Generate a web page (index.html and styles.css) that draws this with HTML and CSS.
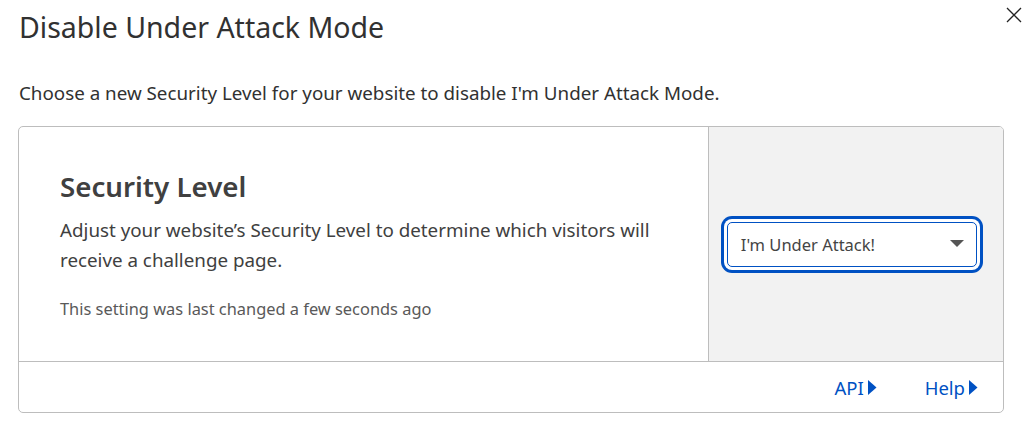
FILE: index.html
```html
<!DOCTYPE html>
<html lang="en">
<head>
<meta charset="utf-8">
<title>Disable Under Attack Mode</title>
<link rel="stylesheet" href="styles.css">
</head>
<body>
<div class="modal">
  <div class="modal-head">
    <h1 class="modal-title">Disable Under Attack Mode</h1>
    <button class="close" aria-label="Close">
      <svg width="16" height="16" viewBox="0 0 16 16"><path d="M1 1L15 15M15 1L1 15" stroke="#222" stroke-width="1.3" fill="none"/></svg>
    </button>
  </div>
  <p class="intro">Choose a new Security Level for your website to disable I'm Under Attack Mode.</p>
  <div class="card">
    <div class="card-body">
      <div class="card-main">
        <h2 class="card-title">Security Level</h2>
        <p class="card-desc">Adjust your website’s Security Level to determine which visitors will receive a challenge page.</p>
        <p class="card-meta">This setting was last changed a few seconds ago</p>
      </div>
      <div class="card-side">
        <div class="select">
          <span class="select-value">I'm Under Attack!</span>
          <svg class="caret" width="14" height="8" viewBox="0 0 14 8"><path d="M0 0H14L7 7Z" fill="#555"/></svg>
        </div>
      </div>
    </div>
    <div class="card-foot">
      <a class="link" href="#">API<svg width="9" height="15" viewBox="0 0 9 15"><path d="M0 0L8.5 7.5L0 15Z" fill="#0051c3"/></svg></a>
      <a class="link" href="#">Help<svg width="9" height="15" viewBox="0 0 9 15"><path d="M0 0L8.5 7.5L0 15Z" fill="#0051c3"/></svg></a>
    </div>
  </div>
</div>
</body>
</html>
```
FILE: styles.css
```css
* { box-sizing: border-box; }
html, body { margin: 0; padding: 0; background: #fff; }
body {
  font-family: "Noto Sans", "Open Sans", sans-serif;
  color: #313131;
}
.modal {
  width: 1034px;
  padding: 0 30px 0 18px;
}
.modal-head {
  display: flex;
  justify-content: space-between;
  align-items: flex-start;
  height: 70px;
}
.modal-title {
  margin: 8px 0 0 1px;
  font-size: 28.5px;
  font-weight: 400;
  line-height: 38px;
  color: #313131;
}
.close {
  margin: 7px -18px 0 0;
  padding: 0;
  border: 0;
  background: none;
  width: 16px;
  height: 16px;
  display: flex;
}
.intro {
  margin: 8px 0 18px 1px;
  font-size: 18.8px;
  line-height: 30px;
  color: #313131;
}
.card {
  border: 1px solid #bdbdbd;
  border-radius: 5px;
  overflow: hidden;
}
.card-body {
  display: grid;
  grid-template-columns: 70% 30%;
  height: 235px;
  border-bottom: 1px solid #bdbdbd;
}
.card-main {
  padding: 0 40px 1px 41px;
  display: flex;
  flex-direction: column;
  justify-content: center;
}
.card-title {
  margin: 0 0 11px;
  font-size: 27.7px;
  font-weight: 600;
  line-height: 36px;
  color: #404040;
}
.card-desc {
  margin: 0 0 23px;
  font-size: 18.8px;
  line-height: 30px;
  color: #404040;
}
.card-meta {
  margin: 0;
  font-size: 16.4px;
  line-height: 22px;
  color: #595959;
}
.card-side {
  background: #f2f2f2;
  border-left: 1px solid #bdbdbd;
  display: flex;
  align-items: center;
  padding-left: 18px;
}
.select {
  width: 250px;
  height: 45px;
  background: #fff;
  border: 1px solid #0051c3;
  border-radius: 5px;
  box-shadow: 0 0 0 3px #fff, 0 0 0 6px #0051c3;
  display: flex;
  align-items: center;
  justify-content: space-between;
  padding: 0 12px 0 13px;
}
.select-value {
  font-size: 16.5px;
  color: #444;
}
.caret { display: block; }
.card-foot {
  height: 50px;
  display: flex;
  justify-content: flex-end;
  align-items: center;
  gap: 48px;
  padding-right: 25px;
}
.link {
  display: flex;
  align-items: center;
  gap: 4px;
  font-size: 18.5px;
  color: #0051c3;
  text-decoration: none;
}
.link svg { display: block; }
```
